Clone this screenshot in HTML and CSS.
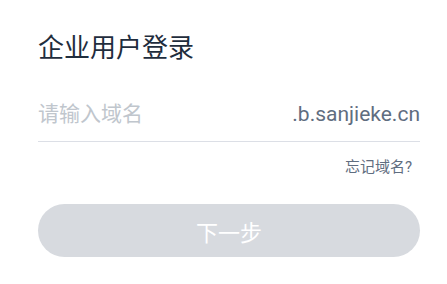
FILE: index.html
```html
<!DOCTYPE html>
<html lang="zh">
<head>
<meta charset="utf-8">
<link rel="stylesheet" href="styles.css">
</head>
<body>
<div class="login">
  <h1 class="title">企业用户登录</h1>
  <div class="field">
    <span class="placeholder">请输入域名</span>
    <span class="suffix">.b.sanjieke.cn</span>
  </div>
  <div class="forgot-row"><a class="forgot">忘记域名?</a></div>
  <button class="next">下一步</button>
</div>
</body>
</html>
```
FILE: styles.css
```css
html, body {
  margin: 0;
  padding: 0;
  background: #ffffff;
}
body {
  font-family: Roboto, "Noto Sans CJK SC", sans-serif;
}
.login {
  width: 382px;
  margin-left: 38px;
  padding-top: 31px;
}
.title {
  margin: 0;
  font-size: 26px;
  font-weight: 400;
  line-height: 34px;
  color: #1f2d3d;
}
.field {
  margin-top: 34px;
  display: flex;
  align-items: center;
  justify-content: space-between;
  border-bottom: 1px solid #dcdfe6;
  padding-bottom: 12px;
  font-size: 21px;
  line-height: 30px;
}
.placeholder {
  color: #c0c6cd;
}
.suffix {
  color: #5f6d80;
}
.forgot-row {
  display: flex;
  justify-content: flex-end;
  margin-top: 14px;
  height: 22px;
  padding-right: 8px;
}
.forgot {
  font-size: 15px;
  line-height: 22px;
  color: #5f6d80;
}
.next {
  display: block;
  margin-top: 26px;
  width: 382px;
  height: 53px;
  border: none;
  border-radius: 27px;
  background: #d7dadf;
  color: #ffffff;
  font-family: Roboto, "Noto Sans CJK SC", sans-serif;
  font-size: 22px;
  padding: 0;
}
```
